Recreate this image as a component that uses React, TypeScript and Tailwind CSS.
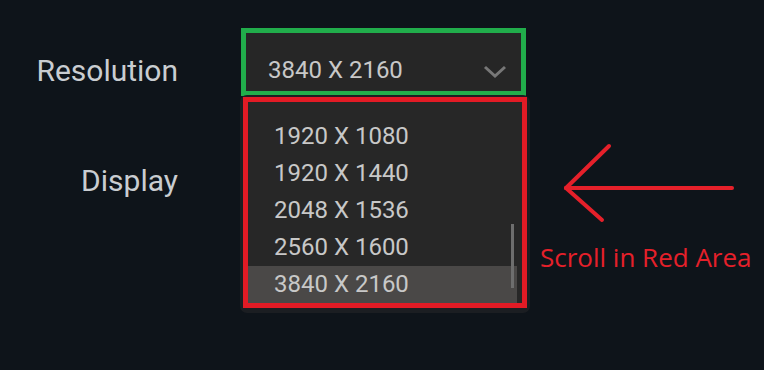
import React from "react";

const options = ["1920 X 1080", "1920 X 1440", "2048 X 1536", "2560 X 1600", "3840 X 2160"];

export default function App() {
  return (
    <div className="relative w-[764px] h-[370px] overflow-hidden bg-[#0e141a] font-['Roboto',sans-serif]">
      <div className="flex flex-col pt-[28px]">
        <div className="flex items-start">
          <div className="mt-[28px] w-[178px] text-right text-[30px] leading-none text-[#c9cdd1]">Resolution</div>
          <div className="ml-[63px] flex h-[68px] w-[285px] items-end justify-between border-[5px] border-[#21ad4b] bg-[#262626] pb-[3px] pl-[22px] pr-[14px]">
            <span className="text-[24px] leading-[36px] text-[#c8c8c8]">3840 X 2160</span>
            <svg width="24" height="16" viewBox="0 0 24 16" className="mb-[8px]">
              <polyline points="2,3 12,12 22,3" fill="none" stroke="#777777" strokeWidth="3" />
            </svg>
          </div>
        </div>
        <div className="mt-[70px] flex items-center">
          <div className="w-[178px] text-right text-[30px] leading-none text-[#c9cdd1]">Display</div>
        </div>
      </div>

      <div className="absolute left-[240px] top-[95px] w-[290px] rounded-[7px] bg-[#1b1e22] px-[3px] pt-[2px] pb-[5px]">
        <div className="relative border-[5px] border-[#e21b25] bg-[#272727] pt-[16px] pr-[5px]">
          {options.map((o, i) => (
            <div
              key={o}
              className={
                i === options.length - 1
                  ? "h-[37px] pl-[26px] text-[24px] leading-[37px] text-[#c8c8c8] bg-[#4a4847]"
                  : "h-[37px] pl-[26px] text-[24px] leading-[37px] text-[#c8c8c8]"
              }
            >
              {o}
            </div>
          ))}
          <div className="absolute right-[8px] top-[122px] h-[64px] w-[3px] bg-[#6e6e6e]" />
        </div>
      </div>

      <svg className="absolute left-0 top-0" width="764" height="370" viewBox="0 0 764 370">
        <g stroke="#e5202a" strokeWidth="4" strokeLinecap="round" fill="none">
          <line x1="566" y1="188" x2="732" y2="188" />
          <line x1="566" y1="188" x2="609" y2="146" />
          <line x1="566" y1="188" x2="602" y2="220" />
        </g>
      </svg>
      <div className="absolute left-[540px] top-[241px] text-[26px] leading-[32px] text-[#e5202a] font-['Open_Sans',sans-serif]">
        Scroll in Red Area
      </div>
    </div>
  );
}
